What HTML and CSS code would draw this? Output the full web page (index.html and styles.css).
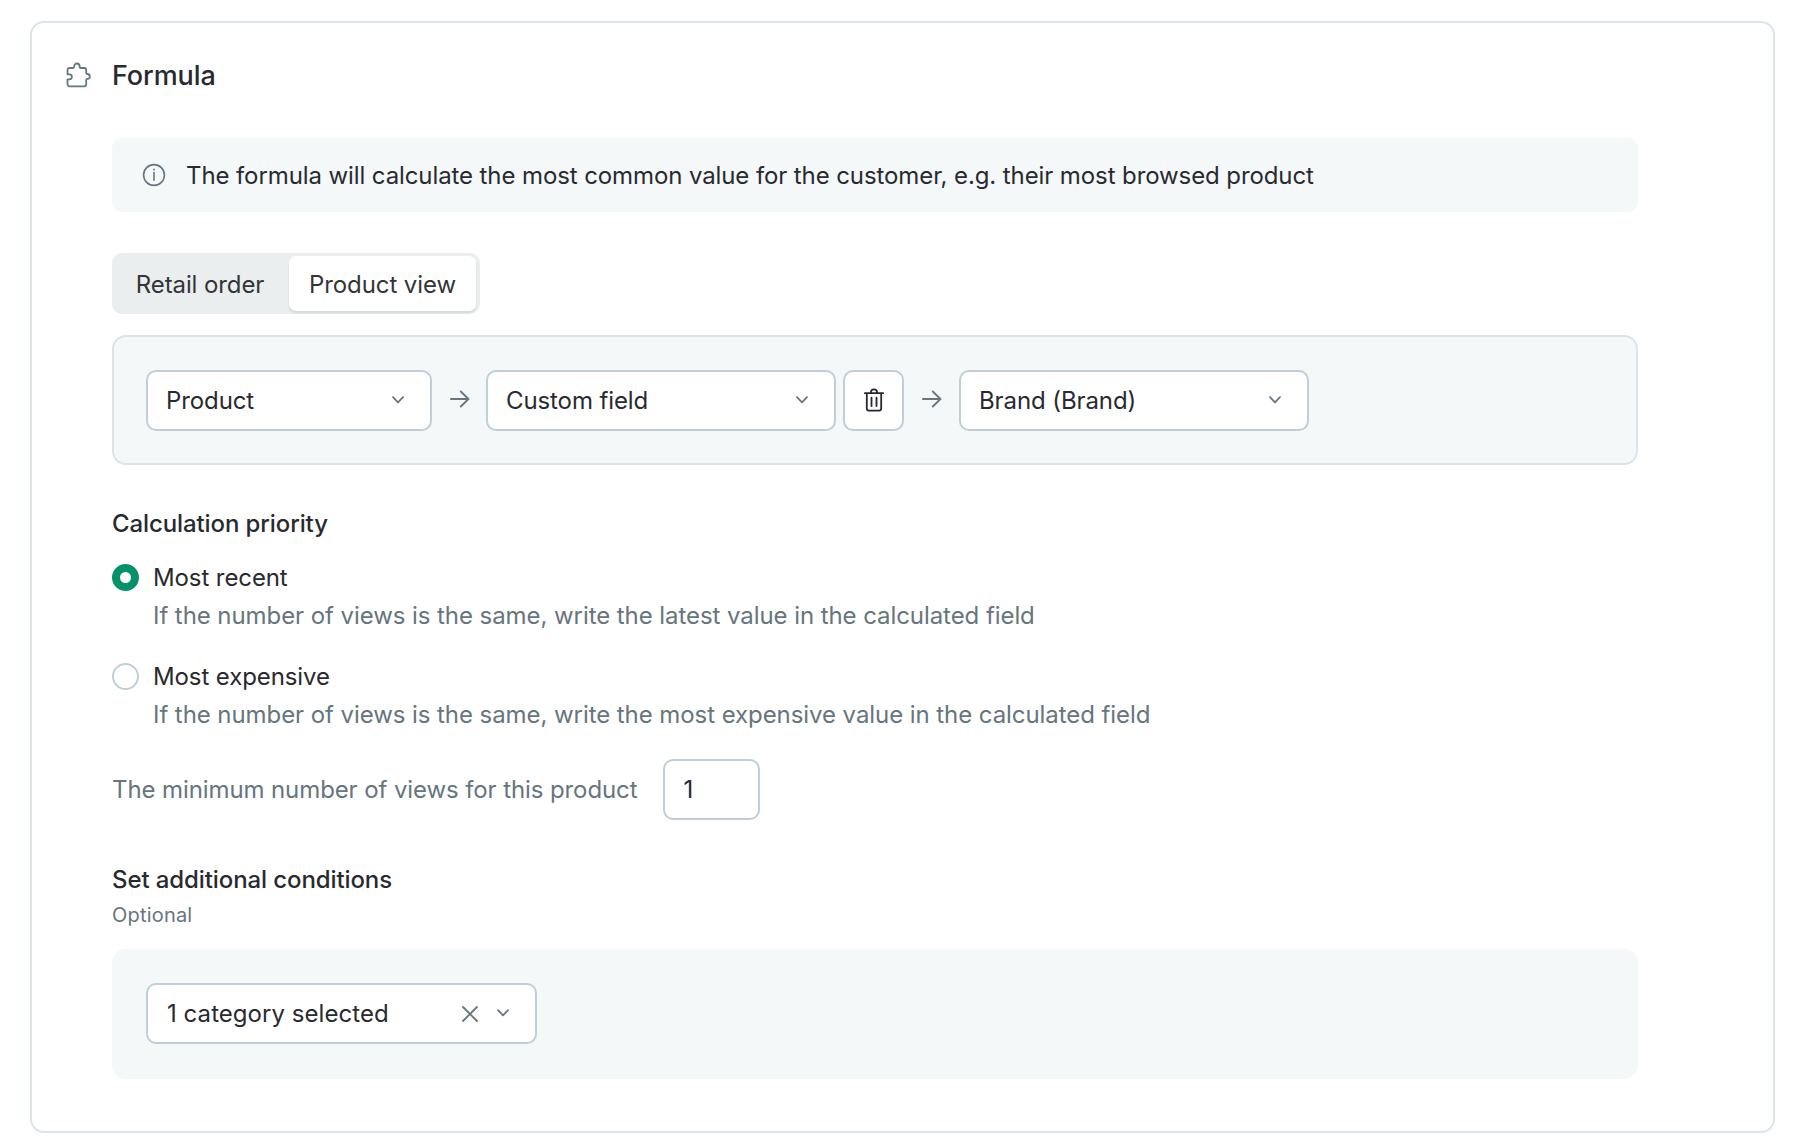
FILE: index.html
```html
<!DOCTYPE html>
<html lang="en">
<head>
    <meta charset="UTF-8">
    <meta name="viewport" content="width=device-width, initial-scale=1.0">
    <title>Formula</title>
    <link rel="stylesheet" href="styles.css">
</head>
<body>
    <section class="card">
        <header class="card-header">
            <svg class="icon-puzzle" viewBox="0 0 26 26" width="26" height="26">
                <path d="M3.5 6 H7 Q8.2 6 8.2 4.6 V4.2 A2.7 2.7 0 0 1 13.6 4.2 V4.6 Q13.6 6 14.8 6 H18.2 A2 2 0 0 1 20.2 8 V11 Q20.2 12 21.4 12 A2.4 2.4 0 0 1 21.4 16.8 Q20.2 16.8 20.2 18 V22.3 A2 2 0 0 1 18.2 24.3 H3.5 A2 2 0 0 1 1.5 22.3 V17.3 H3.4 A2.5 2.5 0 0 0 3.4 12.3 H1.5 V8 A2 2 0 0 1 3.5 6 Z"/>
            </svg>
            <h2>Formula</h2>
        </header>

        <div class="content">
            <div class="info">
                <svg class="icon-info" viewBox="0 0 24 24" width="24" height="24">
                    <circle cx="12" cy="12" r="10.4"/>
                    <path d="M12 9.6 V17.2"/>
                    <path d="M12 6.4 V7"/>
                </svg>
                <p>The formula will calculate the most common value for the customer, e.g. their most browsed product</p>
            </div>

            <div class="tabs">
                <button type="button" class="tab">Retail order</button>
                <button type="button" class="tab active">Product view</button>
            </div>

            <div class="panel bordered">
                <div class="select product">
                    <span>Product</span>
                    <svg class="chevron" viewBox="0 0 12 8" width="12" height="8"><path d="M1 1.2 L6 6.3 L11 1.2"/></svg>
                </div>
                <svg class="arrow" viewBox="0 0 20 18" width="20" height="18"><path d="M0.8 9 H18.5 M10.8 1.5 L18.5 9 L10.8 16.5"/></svg>
                <div class="select">
                    <span>Custom field</span>
                    <svg class="chevron" viewBox="0 0 12 8" width="12" height="8"><path d="M1 1.2 L6 6.3 L11 1.2"/></svg>
                </div>
                <button type="button" class="delete" aria-label="Delete">
                    <svg class="icon-trash" viewBox="0 0 20 24" width="20" height="24">
                        <path d="M0.8 5.2 H19.2 M2.8 5.2 V20.6 A2 2 0 0 0 4.8 22.6 H15.2 A2 2 0 0 0 17.2 20.6 V5.2 M7 5 V4 A3 2.6 0 0 1 13 4 V5 M7.5 9.7 V18 M12.5 9.7 V18"/>
                    </svg>
                </button>
                <svg class="arrow last" viewBox="0 0 20 18" width="20" height="18"><path d="M0.8 9 H18.5 M10.8 1.5 L18.5 9 L10.8 16.5"/></svg>
                <div class="select">
                    <span>Brand (Brand)</span>
                    <svg class="chevron" viewBox="0 0 12 8" width="12" height="8"><path d="M1 1.2 L6 6.3 L11 1.2"/></svg>
                </div>
            </div>

            <h3 class="priority-title">Calculation priority</h3>
            <div class="options">
                <label class="option">
                    <input type="radio" name="priority" checked>
                    <span class="option-text">
                        <span>Most recent</span>
                        <span class="hint">If the number of views is the same, write the latest value in the calculated field</span>
                    </span>
                </label>
                <label class="option">
                    <input type="radio" name="priority">
                    <span class="option-text">
                        <span>Most expensive</span>
                        <span class="hint">If the number of views is the same, write the most expensive value in the calculated field</span>
                    </span>
                </label>
            </div>

            <div class="minimum">
                <label for="min-views">The minimum number of views for this product</label>
                <input type="text" id="min-views" value="1">
            </div>

            <h3 class="conditions-title">Set additional conditions</h3>
            <p class="optional">Optional</p>
            <div class="panel">
                <div class="select category">
                    <span>1 category selected</span>
                    <svg class="clear" viewBox="0 0 16 16" width="16" height="16"><path d="M1 1 L15 15 M15 1 L1 15"/></svg>
                    <svg class="chevron" viewBox="0 0 12 8" width="12" height="8"><path d="M1 1.2 L6 6.3 L11 1.2"/></svg>
                </div>
            </div>
        </div>
    </section>
</body>
</html>
```
FILE: styles.css
```css
* {
    box-sizing: border-box;
}
body {
    font-family: Inter, sans-serif;
    font-size: 24px;
    line-height: 32px;
    letter-spacing: -0.1px;
    background-color: #fff;
    color: #292a30;
    margin: 0;
    padding: 21px 29px 0 30px;
}
h2, h3, p {
    margin: 0;
    font-weight: 400;
}
svg {
    display: block;
    flex: none;
    fill: none;
    stroke: #667680;
    stroke-width: 1.8;
    stroke-linecap: round;
    stroke-linejoin: round;
}
button, input {
    font: inherit;
    letter-spacing: inherit;
    color: inherit;
    margin: 0;
}
.card {
    height: 1112px;
    border: 2px solid #dbe5e9;
    border-radius: 14px;
    padding: 36px 0 0 34px;
}
.card-header {
    display: flex;
    align-items: center;
    gap: 20px;
    height: 32px;
}
.card-header h2 {
    padding-top: 1px;
    font-size: 27px;
    font-weight: 500;
}
.content {
    width: 1526px;
    margin: 47px 0 0 46px;
}
.info {
    display: flex;
    align-items: center;
    gap: 20px;
    height: 74px;
    padding-left: 30px;
    background-color: #f4f8f9;
    border-radius: 10px;
}
.info p {
    padding-top: 2px;
}
.icon-info {
    stroke-width: 1.6;
}
.tabs {
    display: flex;
    width: 368px;
    height: 61px;
    margin-top: 41px;
    padding: 3px 4px 3px 3px;
    background-color: #ebeeef;
    border-radius: 10px;
}
.tab {
    width: 174px;
    padding: 2px 4px 0 0;
    border: none;
    border-radius: 7px;
    background: none;
    color: #333539;
}
.tab.active {
    width: 187px;
    padding: 2px 0 0;
    background-color: #fff;
    box-shadow: 0 2px 2px rgba(60, 80, 95, 0.14);
}
.panel {
    display: flex;
    align-items: flex-start;
    height: 130px;
    padding: 34px 0 0 34px;
    background-color: #f4f8f9;
    border-radius: 14px;
}
.panel.bordered {
    margin-top: 21px;
    padding: 33px 0 0 32px;
    border: 2px solid #dbe5e9;
}
.select {
    display: flex;
    align-items: center;
    width: 350px;
    height: 61px;
    padding: 0 26px 0 18px;
    border: 2px solid #bfced7;
    border-radius: 10px;
    background-color: #fff;
}
.select span {
    flex: 1;
    padding-top: 1px;
}
.product {
    width: 286px;
}
.category {
    width: 391px;
    padding-left: 19px;
}
.category span {
    letter-spacing: 0.05px;
}
.chevron {
    margin-bottom: 1px;
}
.clear {
    margin-right: 19px;
}
.arrow {
    margin: 20px 16px 0 18px;
}
.arrow.last {
    margin-right: 17px;
}
.delete {
    display: flex;
    align-items: center;
    justify-content: center;
    width: 61px;
    height: 61px;
    margin-left: 7px;
    padding: 0 0 1px;
    border: 2px solid #bfced7;
    border-radius: 10px;
    background-color: #fff;
}
.icon-trash {
    stroke: #26282e;
}
h3 {
    font-size: 24px;
    font-weight: 500;
}
.priority-title {
    margin: 43px 0 22px;
}
.options {
    height: 197px;
}
.option {
    display: flex;
    gap: 14px;
    height: 99px;
}
.option input {
    appearance: none;
    width: 27px;
    height: 27px;
    margin-top: 2px;
    border: 2px solid #bfced7;
    border-radius: 50%;
}
.option input:checked {
    border: 8px solid #07916b;
}
.option-text {
    display: flex;
    flex-direction: column;
    gap: 6px;
}
.hint, .minimum label, .optional {
    color: #66757e;
}
.hint {
    letter-spacing: -0.07px;
}
.minimum {
    display: flex;
    align-items: center;
    gap: 26px;
}
.minimum input {
    width: 97px;
    height: 61px;
    padding: 0 18px;
    border: 2px solid #bfced7;
    border-radius: 10px;
}
.conditions-title {
    margin-top: 44px;
}
.optional {
    margin: 3px 0 18px;
    font-size: 20px;
    letter-spacing: 0.2px;
}
```
